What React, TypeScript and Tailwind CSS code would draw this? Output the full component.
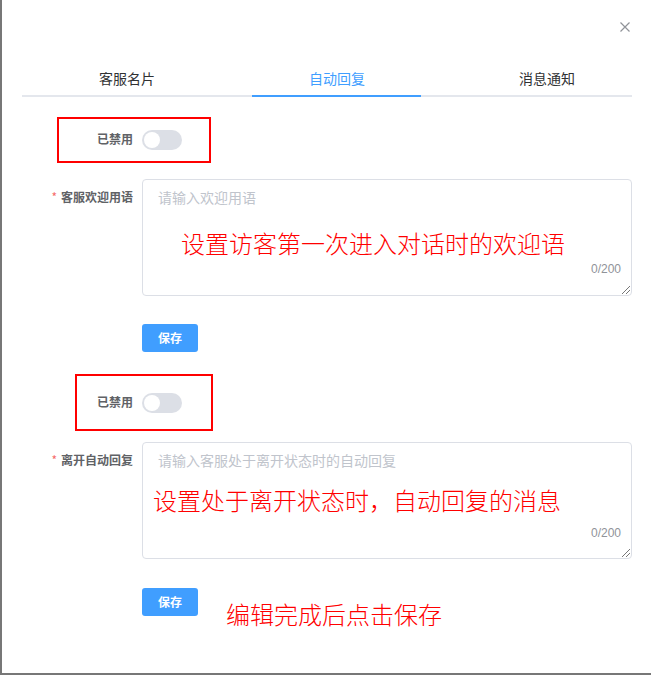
import React from 'react';

const cjk = "font-['Noto_Sans_CJK_SC','Noto_Sans',sans-serif]";

const Switch = () => (
  <span className="flex items-center w-[40px] h-[20px] rounded-full bg-[#dcdfe6] px-[2px]">
    <span className="block w-[16px] h-[16px] rounded-full bg-white" />
  </span>
);

const SaveButton = () => (
  <button
    type="button"
    className="w-[56px] h-[28px] shrink-0 rounded-[3px] bg-[#409eff] text-white text-[12px] font-bold leading-[28px]"
  >
    保存
  </button>
);

const ResizeHandle = () => (
  <svg width="9" height="9" viewBox="0 0 9 9" className="block">
    <line x1="1" y1="9" x2="9" y2="1" stroke="#777" strokeWidth="1" />
    <line x1="5" y1="9" x2="9" y2="5" stroke="#777" strokeWidth="1" />
  </svg>
);

interface AreaProps {
  label: string;
  placeholder: string;
  note: string;
  noteGap: string;
  noteLeft: string;
  countGap: string;
}

const TextRow: React.FC<AreaProps> = ({ label, placeholder, note, noteGap, noteLeft, countGap }) => (
  <div className="flex items-start">
    <div className="w-[140px] shrink-0 flex justify-end pr-[9px] mt-[8px] leading-[20px]">
      <span className="text-[#f56c6c] text-[12px] mr-[4px]">*</span>
      <span className="text-[12px] font-bold text-[#606266]">{label}</span>
    </div>
    <div className="w-[490px] h-[117px] border border-[#dcdfe6] rounded-[4px] flex flex-col">
      <div className="px-[15px] pt-[7px] text-[14px] leading-[20px] text-[#c0c4cc]">{placeholder}</div>
      <div className={`${noteGap} ${noteLeft} text-[24px] leading-[32px] font-light text-[#ff0000] whitespace-nowrap`}>
        {note}
      </div>
      <div className={`${countGap} pr-[10px] text-right text-[12px] leading-[16px] text-[#909399] font-['Liberation_Sans',sans-serif]`}>
        0/200
      </div>
      <div className="mt-auto flex justify-end pr-[1px] pb-[1px]">
        <ResizeHandle />
      </div>
    </div>
  </div>
);

export default function App() {
  return (
    <div className={`w-[651px] h-[675px] bg-white border-l-2 border-b-2 border-[#777777] overflow-hidden ${cjk}`}>
      <div className="h-[57px] flex justify-end pt-[22px] pr-[21px]">
        <svg width="10" height="10" viewBox="0 0 10 10">
          <path d="M0.5 0.5 L9.5 9.5 M9.5 0.5 L0.5 9.5" stroke="#909399" strokeWidth="1.2" />
        </svg>
      </div>

      <div className="ml-[20px] w-[610px]">
        <div className="flex h-[38px] text-[14px]">
          <div className="w-[210px] shrink-0 flex items-center justify-center pt-[4px] text-[#303133]">客服名片</div>
          <div className="w-[210px] shrink-0 flex items-center justify-center pt-[4px] text-[#409eff]">自动回复</div>
          <div className="w-[190px] shrink-0 flex items-center justify-center pt-[4px] pl-[20px] text-[#303133] whitespace-nowrap">消息通知</div>
        </div>
        <div className="h-[2px] bg-[#e4e7ed]">
          <div className="ml-[230px] w-[169px] h-full bg-[#409eff]" />
        </div>
      </div>

      <div className="mt-[20px] ml-[55px] w-[154px] h-[46px] border-2 border-[#ff0000] flex items-center pl-[38px]">
        <span className="text-[12px] font-bold text-[#606266] mr-[9px] leading-[16px] -mt-[2px]">已禁用</span>
        <Switch />
      </div>

      <div className="mt-[16px]">
        <TextRow
          label="客服欢迎用语"
          placeholder="请输入欢迎用语"
          note="设置访客第一次进入对话时的欢迎语"
          noteGap="mt-[20px]"
          noteLeft="pl-[38px]"
          countGap="mt-[2px]"
        />
      </div>

      <div className="mt-[28px] ml-[140px]">
        <SaveButton />
      </div>

      <div className="mt-[22px] ml-[73px] w-[138px] h-[57px] border-2 border-[#ff0000] flex items-center pl-[20px]">
        <span className="text-[12px] font-bold text-[#606266] mr-[9px] leading-[16px] -mt-[2px]">已禁用</span>
        <Switch />
      </div>

      <div className="mt-[11px]">
        <TextRow
          label="离开自动回复"
          placeholder="请输入客服处于离开状态时的自动回复"
          note="设置处于离开状态时，自动回复的消息"
          noteGap="mt-[14px]"
          noteLeft="pl-[10px]"
          countGap="mt-[9px]"
        />
      </div>

      <div className="mt-[29px] ml-[140px] flex items-start">
        <SaveButton />
        <div className="ml-[28px] mt-[10px] text-[24px] leading-[32px] font-light text-[#ff0000] whitespace-nowrap">
          编辑完成后点击保存
        </div>
      </div>
    </div>
  );
}
